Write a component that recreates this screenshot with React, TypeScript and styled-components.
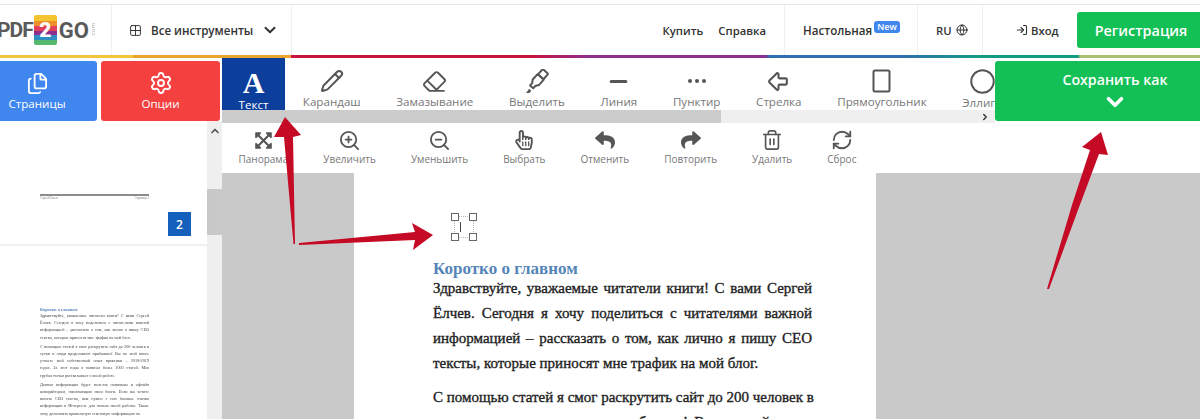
import styled, { createGlobalStyle } from 'styled-components';
import {
  ArrowBigLeft,
  Circle,
  Eraser,
  Files,
  Globe,
  Grid2x2,
  LogIn,
  Minus,
  Pencil,
  RefreshCw,
  Settings,
  Trash2,
  ZoomIn,
  ZoomOut,
  ChevronDown,
  ChevronRight,
  ChevronUp,
} from 'lucide-react';
import { FaExpandArrowsAlt, FaRegHandPointer, FaReply, FaShare } from 'react-icons/fa';

const Dots = () => (
  <svg width="24" height="24" viewBox="0 0 24 24" fill="#555">
    <circle cx="5" cy="12" r="2" />
    <circle cx="12" cy="12" r="2" />
    <circle cx="19" cy="12" r="2" />
  </svg>
);

const Marker = () => (
  <svg width="25" height="25" viewBox="0 0 24 24" fill="none" stroke="#555" strokeWidth="1.9" strokeLinejoin="round">
    <g transform="rotate(42 12 12)">
      <rect x="8.5" y="-1" width="7" height="7" rx="1" />
      <path d="M8 6h8v7l-2 3v3h-4v-3l-2-3z" />
    </g>
    <path d="M2 23l3-4 2 2-2 2z" fill="#555" stroke="none" />
  </svg>
);

const TallRect = () => (
  <svg width="19" height="24" viewBox="0 0 19 24" fill="none" stroke="#555" strokeWidth="2">
    <rect x="1.5" y="1.5" width="16" height="21" rx="1.5" />
  </svg>
);

const tools = [
  { label: 'Карандаш', icon: <Pencil size={24} strokeWidth={2} /> },
  { label: 'Замазывание', icon: <Eraser size={25} strokeWidth={1.8} /> },
  { label: 'Выделить', icon: <Marker /> },
  { label: 'Линия', icon: <Minus size={25} strokeWidth={3} /> },
  { label: 'Пунктир', icon: <Dots /> },
  { label: 'Стрелка', icon: <ArrowBigLeft size={25} strokeWidth={2} /> },
  { label: 'Прямоугольник', icon: <TallRect /> },
  { label: 'Эллипс', icon: <Circle size={27} strokeWidth={1.7} /> },
];

const actions = [
  { label: 'Панорама', icon: <FaExpandArrowsAlt size={19} /> },
  { label: 'Увеличить', icon: <ZoomIn size={23} strokeWidth={1.9} /> },
  { label: 'Уменьшить', icon: <ZoomOut size={23} strokeWidth={1.9} /> },
  { label: 'Выбрать', icon: <FaRegHandPointer size={20} /> },
  { label: 'Отменить', icon: <FaReply size={20} /> },
  { label: 'Повторить', icon: <FaShare size={20} /> },
  { label: 'Удалить', icon: <Trash2 size={22} strokeWidth={1.8} /> },
  { label: 'Сброс', icon: <RefreshCw size={22} strokeWidth={2} /> },
];

const docLines = [
  [
    'Здравствуйте, уважаемые читатели книги! С вами Сергей',
    'Ёлчев. Сегодня я хочу поделиться с читателями важной',
    'информацией – рассказать о том, как лично я пишу СЕО',
    'тексты, которые приносят мне трафик на мой блог.',
  ],
  [
    'С помощью статей я смог раскрутить сайт до 200 человек в',
    'сутки и люди продолжают прибывать! Вы на этой книге',
  ],
];

const thumbLines = [
  docLines[0],
  [
    'С помощью статей я смог раскрутить сайт до 200 человек в',
    'сутки и люди продолжают прибывать! Вы на этой книге',
    'узнаете мой собственный опыт практики – 2018-2019',
    'годах. За этот годы я написал более 1000 статей. Моя',
    'грубая статья рассказывает о моей работе.',
  ],
  [
    'Данная информация будет полезна новичкам и офлайн',
    'копирайтерам, начинающим свои блоги. Если вы хотите',
    'писать СЕО тексты, вам нужно с них базовые знания',
    'информации в Интернете для начала своей работы. Также',
    'хочу дополнить правильную текстовую информацию на',
  ],
];

export default function App() {
  return (
    <Page>
      <GlobalStyle />
      <TopStrip />
      <Header>
        <LogoCell>
          <LogoText $tight>PDF</LogoText>
          <LogoMark>
            <LogoTwo>2</LogoTwo>
          </LogoMark>
          <LogoText>GO</LogoText>
          <LogoDomain>.com</LogoDomain>
        </LogoCell>
        <ToolsCell>
          <Grid2x2 size={13} strokeWidth={1.8} />
          <ToolsTitle>Все инструменты</ToolsTitle>
          <ChevronDown size={18} strokeWidth={2.6} />
        </ToolsCell>
        <Spacer />
        <HeaderLinks>
          <HeaderLink>Купить</HeaderLink>
          <HeaderLink>Справка</HeaderLink>
        </HeaderLinks>
        <DesktopCell>
          <DesktopLabel>Настольная</DesktopLabel>
          <NewBadge>New</NewBadge>
        </DesktopCell>
        <LangCell>
          <HeaderLink>RU</HeaderLink>
          <Globe size={12} strokeWidth={2} />
        </LangCell>
        <LoginLink>
          <LogIn size={12} strokeWidth={2.2} />
          Вход
        </LoginLink>
        <RegisterButton>Регистрация</RegisterButton>
      </Header>
      <Rainbow />
      <Workspace>
        <SidePanel>
          <SideButtons>
            <SideButton $color="#3f86ee" $wide>
              <Files size={23} strokeWidth={1.9} />
              Страницы
            </SideButton>
            <SideButton $color="#f54040">
              <Settings size={24} strokeWidth={1.9} />
              Опции
            </SideButton>
          </SideButtons>
          <Thumbs>
            <ThumbList>
              <ThumbPageOne>
                <ThumbRule />
                <ThumbFooter>
                  <span>Сергей Ёлчев</span>
                  <span>Страница 2</span>
                </ThumbFooter>
                <PageBadge>2</PageBadge>
              </ThumbPageOne>
              <ThumbPageTwo>
                <ThumbHeading>Коротко о главном</ThumbHeading>
                {thumbLines.map((para, i) => (
                  <ThumbPara key={i}>
                    {para.map((line, j) => (
                      <ThumbLine key={j} $last={j === para.length - 1}>
                        {line}
                      </ThumbLine>
                    ))}
                  </ThumbPara>
                ))}
              </ThumbPageTwo>
            </ThumbList>
            <ThumbScroll>
              <ScrollArrow>
                <ChevronUp size={12} strokeWidth={3.4} />
              </ScrollArrow>
              <ThumbScrollBar />
            </ThumbScroll>
          </Thumbs>
        </SidePanel>
        <Main>
          <TopRow>
            <ToolStrip>
              <Tools>
                <ActiveTool>
                  <BigA>A</BigA>
                  <span>Текст</span>
                </ActiveTool>
                {tools.map(t => (
                  <Tool key={t.label}>
                    <ToolIcon>{t.icon}</ToolIcon>
                    {t.label}
                  </Tool>
                ))}
              </Tools>
              <HScroll>
                <HScrollBar />
                <ChevronRight size={10} strokeWidth={3.5} />
              </HScroll>
            </ToolStrip>
            <SaveButton>
              Сохранить как
              <ChevronDown size={26} strokeWidth={3.4} />
            </SaveButton>
          </TopRow>
          <ActionRow>
            {actions.map(a => (
              <Action key={a.label}>
                <ActionIcon>{a.icon}</ActionIcon>
                {a.label}
              </Action>
            ))}
          </ActionRow>
          <Canvas>
            <Doc>
              <TextBox>
                <DottedFrame />
                <Handle $corner="tl" />
                <Handle $corner="tr" />
                <Handle $corner="bl" />
                <Handle $corner="br" />
                <Caret />
              </TextBox>
              <DocHeading>Коротко о главном</DocHeading>
              {docLines.map((para, i) => (
                <DocPara key={i}>
                  {para.map((line, j) => (
                    <DocLine key={j} $last={i === 0 && j === para.length - 1}>
                      {line}
                    </DocLine>
                  ))}
                </DocPara>
              ))}
            </Doc>
          </Canvas>
        </Main>
      </Workspace>
      <Arrows width="1200" height="419" viewBox="0 0 1200 419">
        <polygon points="285,117 301,135 293,137 295,244 293.5,244 284,137 274,137" />
        <polygon points="299,243 415,232 412,223 433,235 413,250 415,240 299,245" />
        <polygon points="1101,132 1108,155 1099,154 1078,210 1049,289 1047,289 1072,205 1090,150 1082,147" />
      </Arrows>
    </Page>
  );
}

const GlobalStyle = createGlobalStyle`
  html, body {
    margin: 0;
    padding: 0;
    background: #fff;
  }
`;

const Page = styled.div`
  position: relative;
  width: 1200px;
  height: 419px;
  overflow: hidden;
  background: #fff;
  font-family: 'Open Sans', 'Noto Sans', sans-serif;
  color: #333;
`;

const TopStrip = styled.div`
  height: 4px;
  border-bottom: 1px solid #e6e6e6;
`;

const Header = styled.header`
  display: flex;
  align-items: stretch;
  height: 50px;
`;

const LogoCell = styled.div`
  display: flex;
  align-items: center;
  width: 114px;
  margin-left: -3px;
  flex: none;
  border-right: 1px solid #f0f0f0;
`;

const LogoText = styled.span<{ $tight?: boolean }>`
  font-family: 'Roboto', sans-serif;
  font-size: ${props => (props.$tight ? '21px' : '22px')};
  font-weight: 700;
  letter-spacing: ${props => (props.$tight ? '-1px' : '0')};
  color: #5a5a5a;
`;

const LogoMark = styled.div`
  display: flex;
  align-items: center;
  justify-content: center;
  width: 23px;
  height: 30px;
  margin: 0 2px 0 1px;
  border-radius: 2px;
  background: linear-gradient(
    #f4c430 0 20%,
    #ef8f2b 20% 36%,
    #e0405a 36% 52%,
    #8e2f8f 52% 68%,
    #2f8ec0 68% 84%,
    #55b86c 84%
  );
`;

const LogoTwo = styled.span`
  font-family: 'Roboto', sans-serif;
  font-size: 21px;
  line-height: 1;
  font-weight: 900;
  color: #fff;
`;

const LogoDomain = styled.span`
  writing-mode: vertical-rl;
  transform: rotate(180deg);
  font-size: 6px;
  color: #aaa;
`;

const ToolsCell = styled.div`
  display: flex;
  align-items: center;
  width: 180px;
  padding-left: 17px;
  box-sizing: border-box;
  flex: none;
  border-right: 1px solid #f0f0f0;
  svg:last-child {
    margin-left: 8px;
  }
`;

const ToolsTitle = styled.span`
  margin-left: 9px;
  font-size: 11.6px;
  font-weight: 600;
  white-space: nowrap;
`;

const Spacer = styled.div`
  flex: 1;
`;

const HeaderLinks = styled.nav`
  display: flex;
  align-items: center;
  gap: 15px;
  padding-right: 18px;
  border-right: 1px solid #f0f0f0;
`;

const HeaderLink = styled.span`
  font-size: 11.3px;
  font-weight: 600;
  color: #333;
  white-space: nowrap;
`;

const DesktopLabel = styled(HeaderLink)`
  font-size: 11.6px;
`;

const DesktopCell = styled.div`
  position: relative;
  display: flex;
  align-items: center;
  width: 133px;
  padding-left: 18px;
  box-sizing: border-box;
  border-right: 1px solid #f0f0f0;
`;

const NewBadge = styled.span`
  position: absolute;
  left: 89px;
  top: 16px;
  width: 26px;
  border-radius: 3px;
  background: #3f86ee;
  color: #fff;
  font-size: 9px;
  line-height: 12px;
  font-weight: 600;
  text-align: center;
`;

const LangCell = styled.div`
  display: flex;
  align-items: center;
  gap: 4px;
  width: 65px;
  padding-left: 18px;
  box-sizing: border-box;
  border-right: 1px solid #f0f0f0;
`;

const LoginLink = styled.div`
  display: flex;
  align-items: center;
  gap: 3px;
  width: 94px;
  padding-left: 33px;
  box-sizing: border-box;
  font-size: 11.3px;
  font-weight: 600;
`;

const RegisterButton = styled.button`
  align-self: center;
  width: 123px;
  height: 36px;
  padding: 0 0 0 5px;
  border: 0;
  border-radius: 3px 0 0 3px;
  background: #12c055;
  color: #fff;
  font-family: inherit;
  font-size: 14.4px;
  font-weight: 600;
  flex: none;
`;

const Rainbow = styled.div`
  height: 3px;
  background: linear-gradient(
    90deg,
    #f2c63c 0 133px,
    #e8a42c 133px 291px,
    #c8143e 291px 530px,
    #8e2f8f 590px 765px,
    #2f6eb0 770px 900px,
    #139c84 980px 1078px,
    #a8c06e 1080px
  );
`;

const Workspace = styled.div`
  display: flex;
  height: 361px;
`;

const SidePanel = styled.aside`
  display: flex;
  flex-direction: column;
  width: 222px;
  flex: none;
`;

const SideButtons = styled.div`
  display: flex;
  gap: 4px;
  height: 60px;
  margin-top: 3px;
  padding-right: 2px;
  flex: none;
`;

const SideButton = styled.button<{ $color: string; $wide?: boolean }>`
  display: flex;
  flex-direction: column;
  align-items: center;
  justify-content: center;
  gap: 1px;
  width: ${props => (props.$wide ? '97px' : '119px')};
  padding: 0 ${props => (props.$wide ? '23px' : '0')} 0 0;
  border: 0;
  border-radius: ${props => (props.$wide ? '0 3px 3px 0' : '3px')};
  background: ${props => props.$color};
  color: #fff;
  font-family: inherit;
  font-size: 11.6px;
  flex: none;
`;

const Thumbs = styled.div`
  display: flex;
  flex: 1;
  min-height: 0;
`;

const ThumbList = styled.div`
  width: 207px;
  flex: none;
`;

const ThumbPageOne = styled.div`
  position: relative;
  height: 125px;
  padding: 73px 58px 0 40px;
  box-sizing: border-box;
  border-bottom: 2px solid #f0f0f0;
`;

const ThumbRule = styled.div`
  height: 2px;
  background: #8c8c8c;
`;

const ThumbFooter = styled.div`
  display: flex;
  justify-content: space-between;
  font-family: 'Liberation Serif', serif;
  font-size: 3px;
  line-height: 5px;
  color: #777;
`;

const PageBadge = styled.div`
  position: absolute;
  left: 168px;
  top: 91px;
  display: flex;
  align-items: center;
  justify-content: center;
  width: 23px;
  height: 24px;
  background: #1560bd;
  color: #fff;
  font-size: 12px;
  font-weight: 600;
`;

const ThumbPageTwo = styled.div`
  padding: 61px 58px 0 40px;
  filter: blur(0.3px);
`;

const ThumbHeading = styled.div`
  font-family: 'Liberation Serif', serif;
  font-size: 4.4px;
  line-height: 5px;
  font-weight: 700;
  color: #5b87b8;
`;

const ThumbPara = styled.div`
  margin-bottom: 2px;
`;

const ThumbLine = styled.div<{ $last?: boolean }>`
  font-family: 'Liberation Serif', serif;
  font-size: 4.2px;
  line-height: 7.2px;
  color: #444;
  white-space: nowrap;
  text-align: justify;
  text-align-last: ${props => (props.$last ? 'left' : 'justify')};
`;

const ThumbScroll = styled.div`
  display: flex;
  flex-direction: column;
  align-items: center;
  width: 15px;
  background: #efefef;
  flex: none;
`;

const ScrollArrow = styled.div`
  display: flex;
  justify-content: center;
  height: 68px;
  padding-top: 4px;
  box-sizing: border-box;
  color: #555;
`;

const ThumbScrollBar = styled.div`
  width: 100%;
  height: 46px;
  background: #c8c8c8;
`;

const Main = styled.main`
  display: flex;
  flex-direction: column;
  flex: 1;
  min-width: 0;
`;

const TopRow = styled.div`
  display: flex;
  height: 65px;
  flex: none;
`;

const ToolStrip = styled.div`
  display: flex;
  flex-direction: column;
  width: 773px;
  overflow: hidden;
  flex: none;
`;

const Tools = styled.div`
  display: flex;
  height: 52px;
  flex: none;
`;

const Tool = styled.div`
  display: flex;
  flex-direction: column;
  align-items: center;
  padding: 0 17.85px;
  color: #777;
  font-size: 11.6px;
  line-height: 16px;
  white-space: nowrap;
  flex: none;
`;

const ToolIcon = styled.div`
  display: flex;
  align-items: center;
  justify-content: center;
  height: 39px;
  padding-top: 10px;
  box-sizing: border-box;
  color: #555;
`;

const ActiveTool = styled.div`
  display: flex;
  flex-direction: column;
  align-items: center;
  width: 63px;
  height: 52px;
  background: #0c3f9c;
  color: #fff;
  font-size: 11.6px;
  line-height: 16px;
  flex: none;
`;

const BigA = styled.div`
  height: 39px;
  font-family: 'Liberation Serif', serif;
  font-size: 30px;
  line-height: 49px;
  font-weight: 700;
`;

const HScroll = styled.div`
  position: relative;
  display: flex;
  align-items: center;
  justify-content: flex-end;
  height: 13px;
  padding-right: 5px;
  background: #efefef;
  color: #333;
`;

const HScrollBar = styled.div`
  position: absolute;
  left: 0;
  top: 0;
  bottom: 0;
  width: 499px;
  background: #ccc;
`;

const SaveButton = styled.button`
  display: flex;
  flex-direction: column;
  align-items: center;
  justify-content: center;
  width: 205px;
  height: 60px;
  margin-top: 3px;
  padding: 3px 0 0 35px;
  border: 0;
  border-radius: 3px 0 0 3px;
  background: #12c055;
  color: #fff;
  font-family: inherit;
  font-size: 14.2px;
  font-weight: 600;
  flex: none;
`;

const ActionRow = styled.div`
  display: flex;
  height: 50px;
  margin-left: -1px;
  flex: none;
`;

const Action = styled.div`
  display: flex;
  flex-direction: column;
  align-items: center;
  padding: 0 17.5px;
  color: #777;
  font-size: 10px;
  line-height: 15px;
  white-space: nowrap;
  flex: none;
`;

const ActionIcon = styled.div`
  display: flex;
  align-items: center;
  justify-content: center;
  height: 24px;
  margin-top: 5px;
  color: #555;
`;

const Canvas = styled.div`
  display: flex;
  flex: 1;
  padding-left: 132px;
  background: #c9c9c9;
`;

const Doc = styled.div`
  width: 522px;
  padding: 40px 64px 0 79px;
  box-sizing: border-box;
  background: #fff;
  flex: none;
`;

const TextBox = styled.div`
  position: relative;
  width: 26px;
  height: 28px;
  margin-left: 18px;
`;

const DottedFrame = styled.span`
  position: absolute;
  inset: 3px;
  border: 1px dotted #bbb;
`;

const Handle = styled.span<{ $corner: string }>`
  position: absolute;
  width: 6px;
  height: 6px;
  border: 1px solid #666;
  background: #fff;
  ${props => (props.$corner[0] === 't' ? 'top: 0;' : 'bottom: 0;')}
  ${props => (props.$corner[1] === 'l' ? 'left: 0;' : 'right: 0;')}
`;

const Caret = styled.span`
  position: absolute;
  left: 9px;
  top: 9px;
  width: 1px;
  height: 10px;
  background: #444;
`;

const DocHeading = styled.h2`
  margin: 21px 0 1px;
  font-family: 'Liberation Serif', serif;
  font-size: 17px;
  line-height: 13px;
  font-weight: 700;
  color: #5585b8;
`;

const DocPara = styled.p`
  margin: 0 0 9px;
`;

const DocLine = styled.div<{ $last?: boolean }>`
  font-family: 'Liberation Serif', serif;
  font-size: 15px;
  line-height: 25px;
  color: #222;
  -webkit-text-stroke: 0.35px #222;
  white-space: nowrap;
  text-align: justify;
  text-align-last: ${props => (props.$last ? 'left' : 'justify')};
`;

const Arrows = styled.svg`
  position: absolute;
  left: 0;
  top: 0;
  fill: #c40a24;
  pointer-events: none;
`;
